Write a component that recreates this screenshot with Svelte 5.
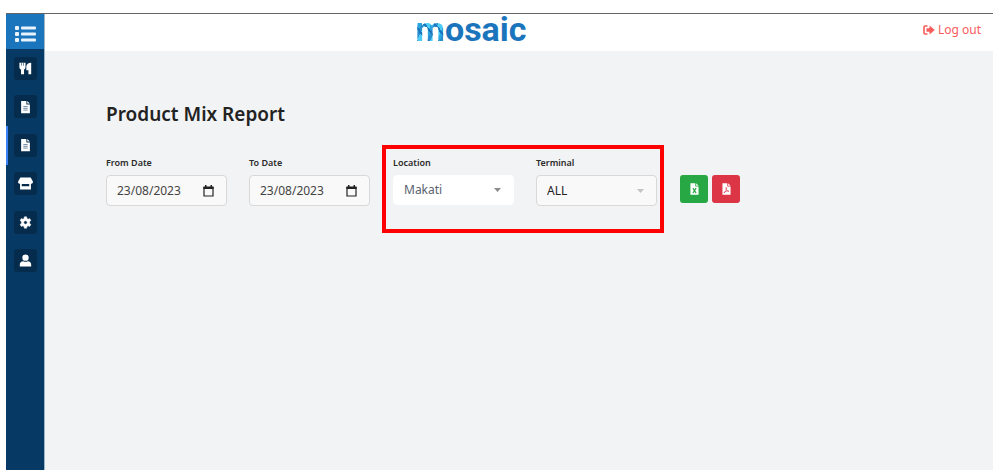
<script>
  let fromDate = '23/08/2023';
  let toDate = '23/08/2023';
  let location = 'Makati';
  let terminal = 'ALL';

  const filePath = 'M3 1h6v4h4v10H3zM10 1l3 3h-3z';

  // Sidebar entries, top to bottom
  const navItems = [
    { name: 'Menu', icon: 'utensils' },
    { name: 'Summary', icon: 'file' },
    { name: 'Reports', icon: 'file', active: true },
    { name: 'Store', icon: 'store' },
    { name: 'Settings', icon: 'gear' },
    { name: 'Account', icon: 'user' }
  ];
</script>

<div class="app">
  <aside class="sidebar">
    <button class="menu-toggle" aria-label="Toggle menu">
      <svg width="21" height="18" viewBox="0 0 21 18" fill="#e8f3fb">
        <rect x="0" y="1" width="4" height="4" rx="1" />
        <rect x="0" y="7" width="4" height="4" rx="1" />
        <rect x="0" y="13" width="4" height="4" rx="1" />
        <rect x="6" y="1.5" width="15" height="3" rx="1" />
        <rect x="6" y="7.5" width="15" height="3" rx="1" />
        <rect x="6" y="13.5" width="15" height="3" rx="1" />
      </svg>
    </button>
    <nav>
      {#each navItems as item}
        <a href="#{item.name.toLowerCase()}" class="nav-item" class:active={item.active} aria-label={item.name}>
          <span class="tile">
            <svg class={item.icon} viewBox="0 0 16 16" fill="#fff">
              {#if item.icon === 'utensils'}
                <path d="M.5 1h7.500v5c0 1.800-.8 2.600-1.800 3.100V15H2.500V9.100C1.300 8.600.5 7.800.5 6zM15 1v14h-3.400v-5H9V5.500C9 3 11.500 1 15 1z" />
                <path d="M3 1v3.500M5.500 1v3.500" stroke="#052c4c" stroke-width=".7" />
              {:else if item.icon === 'file'}
                <path d={filePath} />
                <path d="M5.500 7.500h5M5.500 9.500h5M5.500 11.500h5" stroke="#6f86a0" stroke-width="1.100" />
              {:else if item.icon === 'store'}
                <path d="M2.500 1.500h11L16 6c0 1.500-1 2.300-2.200 2.300V14.500H2.200V8.300C1 8.300 0 7.500 0 6zM4 8.500V11h8V8.500z" fill-rule="evenodd" />
              {:else if item.icon === 'gear'}
                <path d="M6.600 1h2.800l.4 2.100 1.400.8 2-.7 1.400 2.400-1.600 1.400v2l1.600 1.400-1.400 2.400-2-.7-1.400.8-.4 2.100H6.600l-.4-2.100-1.400-.8-2 .7-1.400-2.400L3 9V7L1.400 5.600l1.400-2.400 2 .7 1.400-.8zM8 5.800a2.200 2.200 0 1 0 0 4.400 2.200 2.200 0 0 0 0-4.400z" fill-rule="evenodd" stroke="#fff" stroke-width=".6" stroke-linejoin="round" />
              {:else}
                <circle cx="8" cy="4.500" r="3.900" />
                <path d="M1 15.500v-2.300c0-2.600 1.700-4.200 4-4.200 1.800.9 4.200.9 6 0 2.300 0 4 1.600 4 4.200v2.300z" />
              {/if}
            </svg>
          </span>
        </a>
      {/each}
    </nav>
  </aside>

  <div class="main">
    <header>
      <div class="logo"><span class="mosaic-m">m</span>osaic</div>
      <a href="#logout" class="logout">
        <svg width="12" height="10" viewBox="0 0 12 10">
          <path d="M4.500 1H2Q1 1 1 2v6q0 1 1 1h2.500" fill="none" stroke="#f85c5c" stroke-width="1.600" />
          <path d="M3.500 3.200H6.500V.5L11.800 5 6.500 9.500V6.800H3.500z" fill="#f85c5c" />
        </svg>
        Log out
      </a>
    </header>

    <main>
      <h1>Product Mix Report</h1>
      <form class="filters">
        <div class="field">
          <label for="from-date">From Date</label>
          <div class="control">
            <input id="from-date" type="text" bind:value={fromDate} />
            <button type="button" class="calendar" aria-label="Choose from date">
              <svg width="11" height="12" viewBox="0 0 11 12">
                <path d="M1 2.500h9v8.500H1z" fill="none" stroke="#222" stroke-width="1.200" />
                <path d="M.4 1.500h10.200v2.500H.4zM2 0h1.500v2H2zM7.500 0H9v2H7.500z" fill="#222" />
              </svg>
            </button>
          </div>
        </div>
        <div class="field">
          <label for="to-date">To Date</label>
          <div class="control">
            <input id="to-date" type="text" bind:value={toDate} />
            <button type="button" class="calendar" aria-label="Choose to date">
              <svg width="11" height="12" viewBox="0 0 11 12">
                <path d="M1 2.500h9v8.500H1z" fill="none" stroke="#222" stroke-width="1.200" />
                <path d="M.4 1.500h10.200v2.500H.4zM2 0h1.500v2H2zM7.500 0H9v2H7.500z" fill="#222" />
              </svg>
            </button>
          </div>
        </div>

        <div class="highlight">
          <div class="field">
            <label for="location">Location</label>
            <div class="control plain">
              <select id="location" bind:value={location}>
                <option>Makati</option>
              </select>
              <svg class="caret" width="7" height="4" viewBox="0 0 7 4"><path d="M0 0h7L3.500 4z" fill="#8b8b8b" /></svg>
            </div>
          </div>
          <div class="field">
            <label for="terminal">Terminal</label>
            <div class="control">
              <select id="terminal" class="dark" bind:value={terminal}>
                <option>ALL</option>
              </select>
              <svg class="caret" width="7" height="4" viewBox="0 0 7 4"><path d="M0 0h7L3.500 4z" fill="#c4c4c4" /></svg>
            </div>
          </div>
        </div>

        <div class="exports">
          <button type="button" class="excel" aria-label="Export to Excel">
            <svg width="13" height="14" viewBox="0 0 16 16">
              <path d={filePath} fill="#fff" />
              <path d="M6 7l4 6M10 7l-4 6" stroke="#28a745" stroke-width="1.400" />
            </svg>
          </button>
          <button type="button" class="pdf" aria-label="Export to PDF">
            <svg width="13" height="14" viewBox="0 0 16 16">
              <path d={filePath} fill="#fff" />
              <path d="M7.500 6c1 2-.5 5-2.500 7-.8-1 3-3 6-2.500 0 1.500-3.500-.5-3.500-4.500z" fill="none" stroke="#dc3545" stroke-width=".8" />
            </svg>
          </button>
        </div>
      </form>
    </main>
  </div>
</div>

<style>
  :global(body) {
    background: #fff;
  }

  .app {
    display: flex;
    box-sizing: border-box;
    min-height: calc(100vh - 19px);
    margin: 13px 11px 6px 6px;
    border-top: 1px solid #666;
    font-family: "Noto Sans", sans-serif;
    color: #2b2b2b;
  }

  button {
    padding: 0;
    border: 0;
    cursor: pointer;
  }

  svg {
    display: block;
    flex: none;
  }

  .sidebar {
    flex: none;
    width: 38px;
    background: #063963;
    border-right: 1px solid #9db6ca;
  }

  .menu-toggle {
    display: flex;
    align-items: center;
    justify-content: center;
    width: 100%;
    height: 35px;
    padding-top: 4px;
    background: #1b75bc;
  }

  nav {
    display: flex;
    flex-direction: column;
    height: 231px;
  }

  .nav-item {
    display: flex;
    flex: 1;
    align-items: center;
    justify-content: center;
    border-left: 2px solid transparent;
    border-right: 1px solid transparent;
  }

  .nav-item.active {
    border-left-color: #3b82f6;
  }

  .tile {
    display: flex;
    align-items: center;
    justify-content: center;
    width: 23px;
    height: 23px;
    border-radius: 3px;
    background: #052c4c;
  }

  .tile svg {
    width: 13px;
    height: 13px;
  }

  .tile .file {
    width: 15px;
    height: 14px;
  }

  .tile .store {
    width: 15px;
    height: 15px;
  }

  .main {
    flex: 1;
    min-width: 0;
    background: #f2f3f5;
  }

  header {
    display: grid;
    grid-template-columns: 1fr auto 1fr;
    align-items: start;
    height: 37px;
    padding: 0 12px 0 0;
    background: #fff;
  }

  .logo {
    grid-column: 2;
    padding-right: 84px;
    font-family: Roboto, sans-serif;
    font-size: 34px;
    font-weight: 700;
    line-height: 30px;
    color: #1b75bc;
  }

  /* Faceted tiles inside the first letter */
  .mosaic-m {
    color: transparent;
    background:
      repeating-linear-gradient(50deg, transparent 0 6px, #1b75bc 6px 8px),
      repeating-linear-gradient(115deg, #2a8fce 0 3px, #4ccbf5 3px 9px, #2aa5df 9px 12px);
    background-clip: text;
    -webkit-background-clip: text;
  }

  .logout {
    display: flex;
    align-items: center;
    justify-self: end;
    gap: 3px;
    margin-top: 8px;
    font-size: 12px;
    line-height: 16px;
    color: #f85c5c;
    text-decoration: none;
  }

  main {
    padding: 51px 24px 24px 61px;
  }

  h1 {
    margin: 0;
    font-size: 19px;
    font-weight: 600;
    line-height: 24px;
    color: #222;
  }

  .filters {
    display: flex;
    align-items: flex-start;
    margin-top: 19px;
  }

  .field {
    width: 121px;
  }

  .filters > .field {
    margin-top: 12px;
  }

  .filters > .field + .field {
    margin-left: 22px;
  }

  label {
    display: block;
    margin-bottom: 6px;
    font-size: 9px;
    font-weight: 600;
    line-height: 12px;
  }

  .control {
    display: flex;
    align-items: center;
    box-sizing: border-box;
    height: 31px;
    padding: 0 12px 0 10px;
    border: 1px solid #d8d8d8;
    border-radius: 4px;
    background: #f9f9f9;
  }

  .control.plain {
    height: 30px;
    border-color: #fff;
    background: #fff;
  }

  input,
  select {
    flex: 1;
    min-width: 0;
    width: 100%;
    padding: 0;
    border: 0;
    outline: 0;
    appearance: none;
    background: transparent;
    font-family: inherit;
    font-size: 12px;
    line-height: 16px;
    color: #444;
  }

  select.dark {
    color: #222;
  }

  .plain select {
    color: #5a6270;
  }

  .calendar {
    background: transparent;
  }

  .highlight {
    display: flex;
    gap: 22px;
    box-sizing: border-box;
    height: 88px;
    margin-left: 12px;
    padding: 8px 3px 0 7px;
    border: 4px solid #fe0000;
  }

  .exports {
    display: flex;
    gap: 4px;
    margin: 30px 0 0 16px;
  }

  .exports button {
    display: flex;
    align-items: center;
    justify-content: center;
    width: 28px;
    height: 28px;
    border-radius: 3px;
  }

  .excel {
    background: #28a745;
  }

  .pdf {
    background: #dc3545;
  }
</style>
